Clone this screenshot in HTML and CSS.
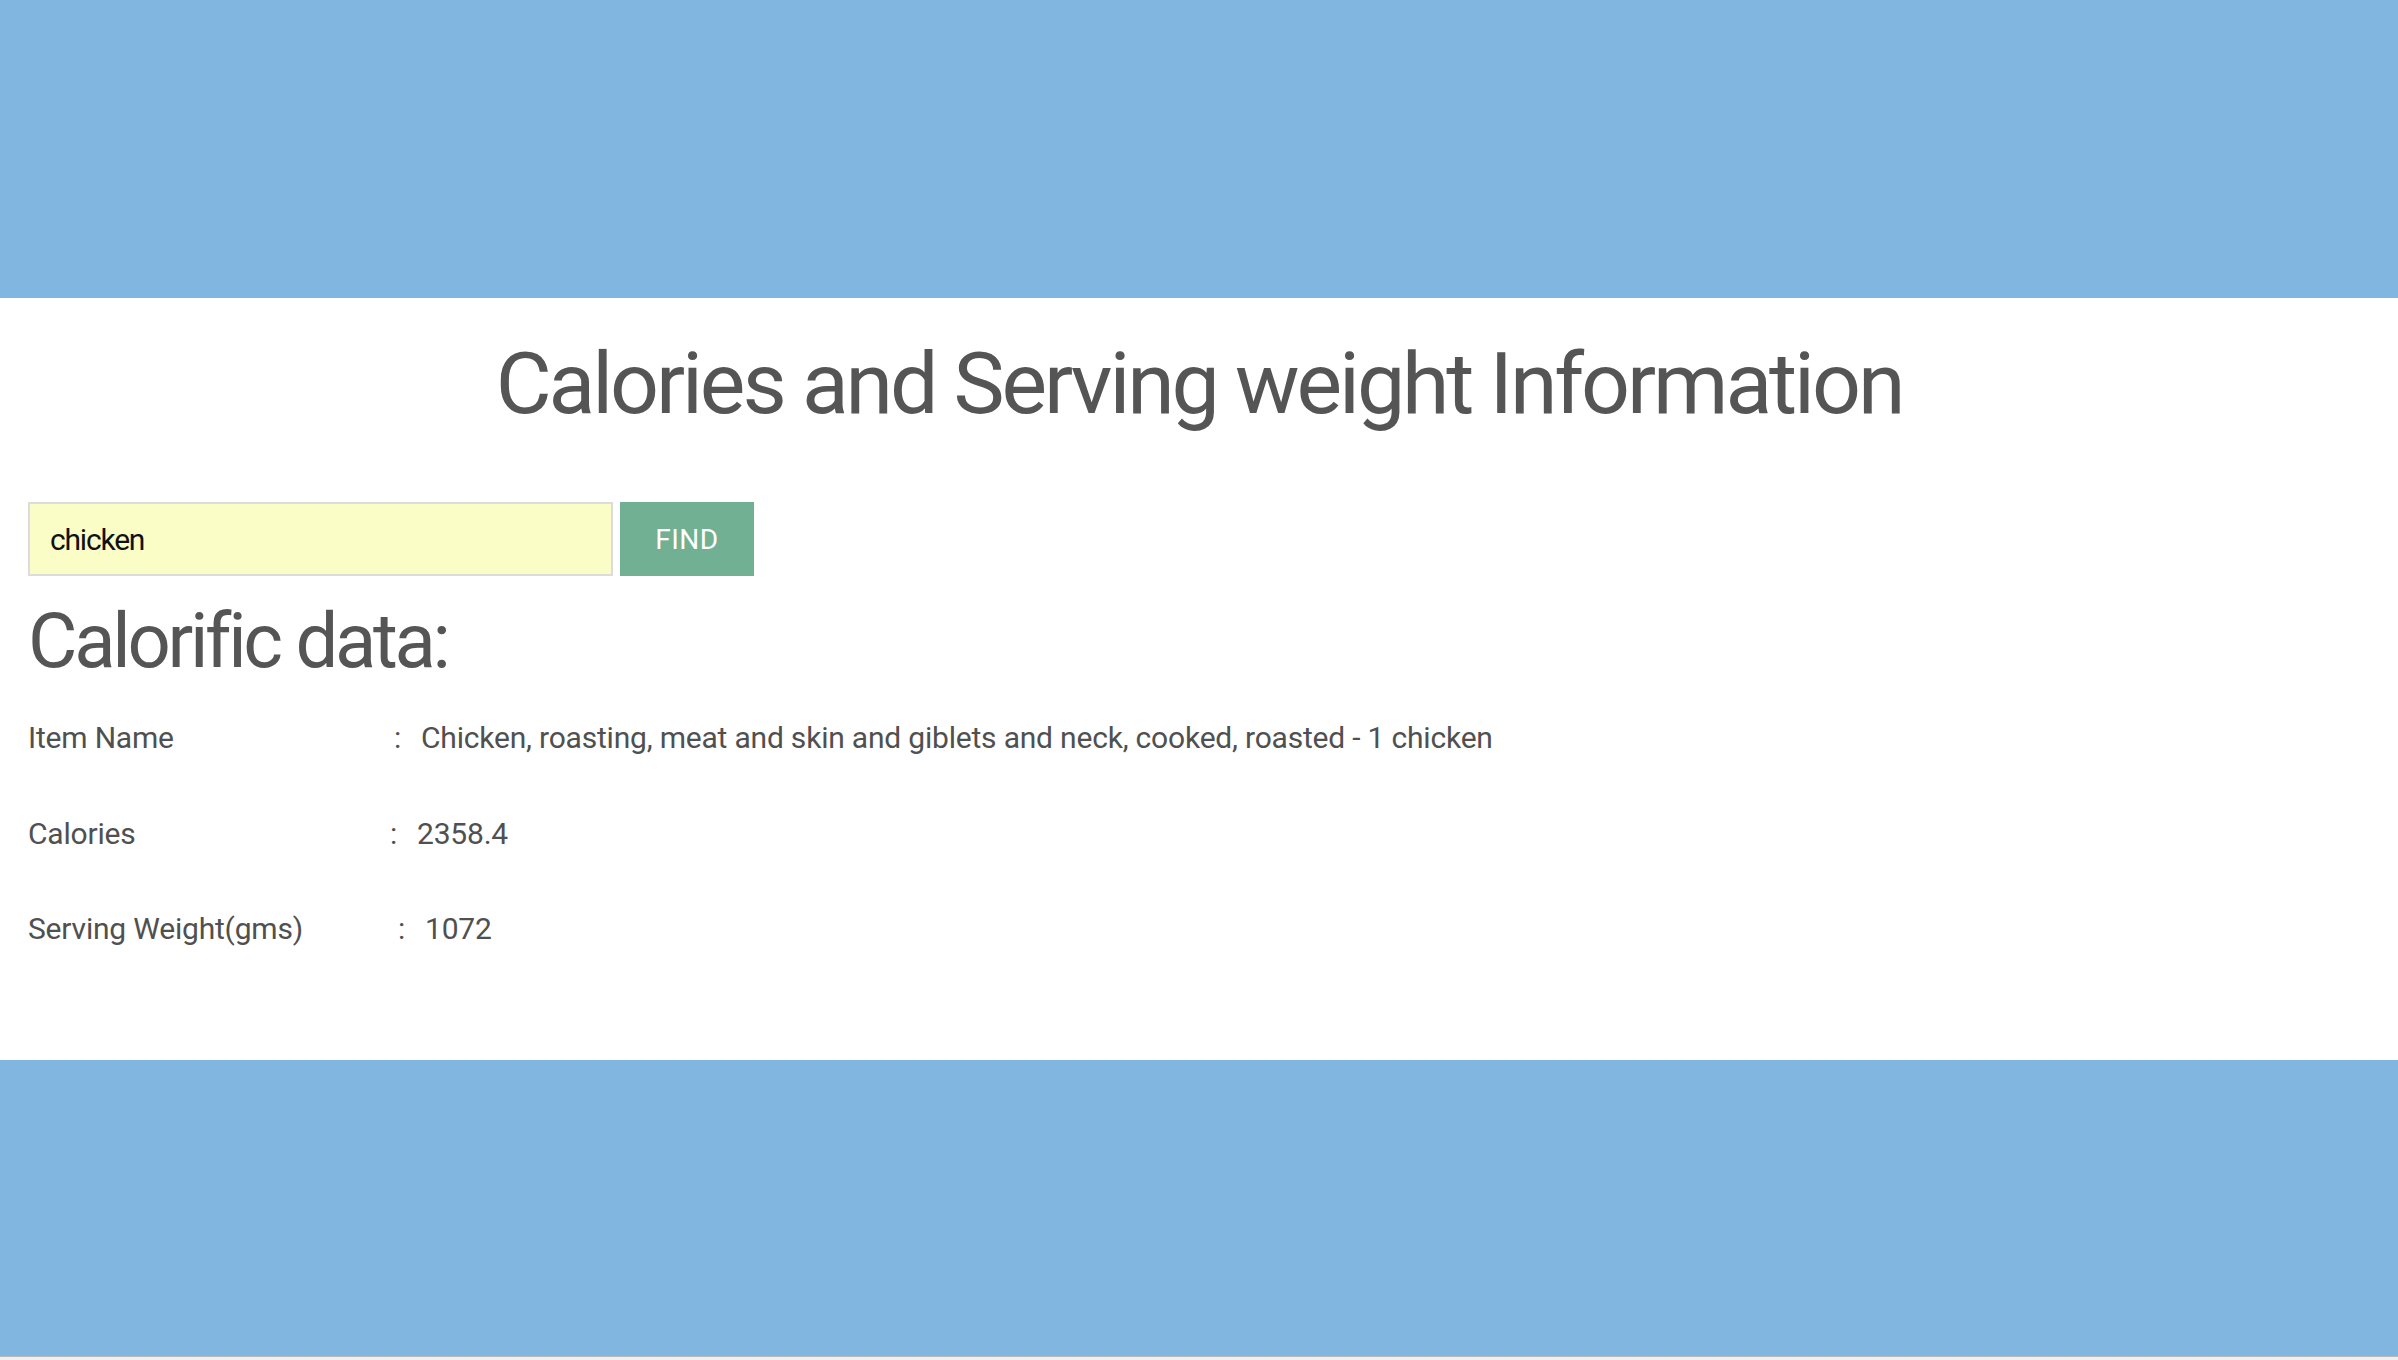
FILE: index.html
```html
<!DOCTYPE html>
<html lang="en">
<head>
<meta charset="utf-8">
<title>Calories and Serving weight Information</title>
<link rel="stylesheet" href="styles.css">
</head>
<body>
<div class="page">
  <header class="band band-top"></header>
  <main class="content">
    <h1 class="title">Calories and Serving weight Information</h1>
    <form class="search" onsubmit="return false;">
      <input class="search-input" type="text" value="chicken">
      <button class="search-btn" type="submit">FIND</button>
    </form>
    <h2 class="subtitle">Calorific data:</h2>
    <div class="data">
      <div class="row">
        <span class="label label-item">Item Name</span>
        <span class="colon">:</span>
        <span class="value">Chicken, roasting, meat and skin and giblets and neck, cooked, roasted - 1 chicken</span>
      </div>
      <div class="row">
        <span class="label label-cal">Calories</span>
        <span class="colon">:</span>
        <span class="value">2358.4</span>
      </div>
      <div class="row">
        <span class="label label-serv">Serving Weight(gms)</span>
        <span class="colon">:</span>
        <span class="value">1072</span>
      </div>
    </div>
  </main>
  <footer class="band band-bottom"></footer>
</div>
</body>
</html>
```

FILE: styles.css
```css
html, body {
  margin: 0;
  padding: 0;
}
body {
  background: #f0f0f0;
  font-family: Roboto, "Liberation Sans", Arial, sans-serif;
  color: #555555;
}
.page {
  display: flex;
  flex-direction: column;
  background: #ffffff;
  border-bottom: 1px solid #b9b9b9;
}
.band {
  background: #80b6e0;
}
.band-top {
  height: 298px;
}
.band-bottom {
  height: 296px;
}
.content {
  height: 762px;
  padding: 0 28px;
  box-sizing: border-box;
  display: flex;
  flex-direction: column;
}
.title {
  margin: 34px 0 0;
  font-size: 86px;
  line-height: 103px;
  font-weight: 400;
  letter-spacing: -3.1px;
  text-align: center;
  color: #555555;
}
.search {
  display: flex;
  gap: 7px;
  margin: 67px 0 0;
}
.search-input {
  width: 585px;
  height: 74px;
  box-sizing: border-box;
  border: 2px solid #dcdcdc;
  background: #fafdc6;
  padding: 0 20px;
  font-family: Roboto, "Liberation Sans", Arial, sans-serif;
  font-size: 30px;
  letter-spacing: -1.2px;
  color: #111111;
  outline: none;
}
.search-btn {
  width: 134px;
  height: 74px;
  border: none;
  background: #71b092;
  color: #ffffff;
  font-family: Roboto, "Liberation Sans", Arial, sans-serif;
  font-size: 28px;
  letter-spacing: 0.5px;
  padding: 0;
}
.subtitle {
  margin: 20px 0 0;
  font-size: 76px;
  line-height: 91px;
  font-weight: 400;
  letter-spacing: -3.3px;
  color: #555555;
}
.data {
  margin-top: 33px;
  display: flex;
  flex-direction: column;
  gap: 59.5px;
}
.row {
  display: flex;
  font-size: 30px;
  line-height: 36px;
  letter-spacing: -0.2px;
  color: #505050;
}
.label {
  width: 366px;
}
.label-cal {
  width: 362px;
}
.label-serv {
  width: 370px;
}
.colon {
  width: 27px;
}
.value {
  flex: 1;
}
```
